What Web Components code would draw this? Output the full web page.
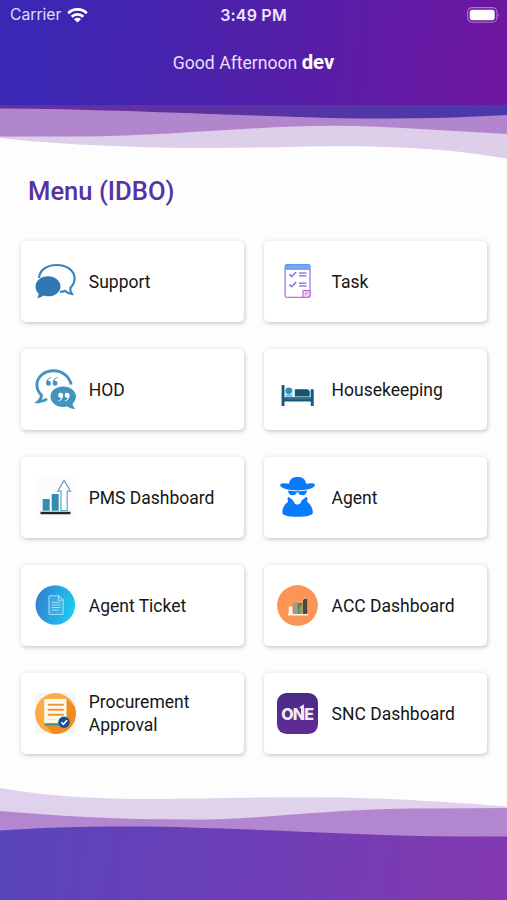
<!DOCTYPE html>
<html lang="en">
<head>
<meta charset="utf-8">
<title>Menu</title>
<style>
html,body{margin:0;padding:0}
body{width:507px;height:900px;overflow:hidden;background:#fdfdfd;font-family:Roboto,"Liberation Sans",sans-serif}
</style>
</head>
<body>
<menu-app></menu-app>
<script>
const define = (name, html) => customElements.define(name, class extends HTMLElement {
  constructor() {
    super();
    this.attachShadow({ mode: 'open' }).innerHTML = html;
  }
});

const ICONS = {
  support: `<path d="M4.200 17C4.200 9.500 11.800 4 21.700 4 32 4 39.600 9.800 39.600 17.500c0 4-1.700 7-4.300 9.500-.2 2 .4 4 1.700 6-3.200-.4-5.200-1.500-6.700-3.100-1.800.6-3.500.9-5.300.9" fill="none" stroke="#3a84bd" stroke-width="2.200"/><path d="M13 15.300c6.900 0 12.500 4.500 12.500 10.100S19.900 35.300 13 35.300c-1.700 0-3.300-.2-4.700-.7C6.700 36 4.600 37 2 37.300c1-1.400 1.600-2.900 1.600-4.800C1.700 30.700.5 28.300.5 25.400c0-5.600 5.600-10.100 12.500-10.100z" fill="#2f78b5"/>`,
  task: `<defs><linearGradient id="g" x1="0" y1="3" x2="0" y2="37" gradientUnits="userSpaceOnUse"><stop stop-color="#5e97f2"/><stop offset="1" stop-color="#c965ee"/></linearGradient></defs><rect x="8" y="4" width="25" height="4.500" fill="#7aa5f2"/><rect x="8.100" y="3.600" width="24.900" height="32.800" rx="1.800" fill="none" stroke="url(#g)" stroke-width="1.300"/><path d="M8 8.200h25" stroke="#6d96ee" stroke-width="1"/><path d="M12.500 13.500l2.200 2 4.500-4.500M12.500 23.700l2.200 2 4.500-4.500" fill="none" stroke="#8a7fdc" stroke-width="1.700"/><path d="M22 12h7.500M22 14.800h7.500M22 22.200h7.500M22 25h7.500" stroke="#8c86e2" stroke-width="1.600"/><path d="M26 36.200v-6.500h7L33 35l-1.500 1.300z" fill="#f1d8fa" stroke="#bd69e8" stroke-width="1.200"/><path d="M28.500 34.200v-2.200h2.300" fill="none" stroke="#c77bea"/>`,
  hod: `<path d="M36.200 15.500C34.200 7.200 27.200 1.800 18.500 1.800 8.700 1.800 1.900 8.300 1.900 15.800c0 4.300 1.700 7.600 4.500 10.200.2 2.500-1 4.800-3.200 6.700 3.900-.1 6.500-1.200 8.800-2.900" fill="none" stroke="#4394bd" stroke-width="2.900"/><path d="M28.200 17.500c7.300 0 12.700 4.400 12.700 10.100 0 3-1.300 5.400-3.300 7.200.2 2 1 3.600 2.800 5.100-3.400.1-6-.7-8-2.300-1.300.3-2.700.5-4.200.5-7.200 0-12.700-4.600-12.700-10.500s5.500-10.100 12.700-10.100z" fill="#4394bd"/><g fill="#4394bd"><path d="M16 8c-3.200 1-5 3.300-5 6.200a2.450 2.450 0 1 0 2-2.400c.2-1.400 1.200-2.400 3.200-3z"/><path d="M22.600 8c-3.200 1-5 3.300-5 6.200a2.450 2.450 0 1 0 2-2.400c.2-1.400 1.200-2.400 3.200-3z"/></g><g fill="#fff"><path d="M23.500 32.500c3-1 4.600-3.300 4.600-6.200a2.450 2.450 0 1 0-2 2.400c-.2 1.400-1 2.400-2.800 3z"/><path d="M30 32.500c3-1 4.600-3.300 4.600-6.200a2.450 2.450 0 1 0-2 2.400c-.2 1.400-1 2.400-2.800 3z"/></g>`,
  bed: `<path d="M4.600 16h2.900v13.200h26.300V20.300h2.900V37h-2.900v-4.500H7.500V37H4.600z" fill="#18587a"/><path d="M7.500 28h26.300v2.500H7.500z" fill="#2a7594"/><rect x="8.200" y="19" width="7.800" height="8.500" rx="1.500" fill="#c6ebf6"/><circle cx="11.800" cy="21.800" r="3.300" fill="#2f92b5"/><path d="M8.300 27.400c.5-3 7-3 7.700 0z" fill="#65bcd6"/><path d="M17.800 20.200h12.700l2.200 2v5.300H17.800z" fill="#15536f"/><path d="M31 20.300l2.300 2v5.200" fill="none" stroke="#55b9d3" stroke-width=".8"/>`,
  pms: `<rect width="41" height="41" fill="#fcfcfc"/><path d="M7.700 22h7v11.700h-7zM16.700 17h7v16.700h-7z" fill="#338daf"/><path d="M26 33.500V14.200h-3.300l6.400-10.700 6.400 10.700h-3.300v19.300z" fill="#fff" stroke="#5ca6c0" stroke-width="1.200"/><path d="M5.500 36h30" stroke="#28272b" stroke-width="2.500"/>`,
  agent: `<g fill="#087bfa"><path d="M12 6.800c.2-2 1.500-4.500 3.600-5.700 2.500-1.400 7.500-1.400 10 0 2.100 1.200 3.200 3.700 3.500 5.700 3-.4 5.500-.8 7.500-.2 1.500.5 1.700 1.900.7 3-2.300 2.300-8.300 3.800-16.600 3.800S6 11.900 3.800 9.600c-1-1.100-.7-2.500.7-3 2-.6 4.500-.2 7.500.2z"/><path d="M11 13.500c5.500 1 13.500 1 19 0-.2 3-2 4.800-4.600 4.800-2.200 0-3.700-1.300-4.200-2.700h-1.400c-.5 1.400-2 2.700-4.200 2.700-2.600 0-4.400-1.800-4.600-4.800z"/><path d="M11.200 19.800l5.200 3.400 1.600 3.900h5l1.600-3.900 5.200-3.400c.8 1.600.8 3.300.2 5 4 2.600 5.800 6.800 5.800 11 0 2.500-5.600 4-15.300 4s-15.200-1.500-15.200-4c0-4.200 1.800-8.400 5.800-11-.7-1.700-.7-3.400.1-5z"/></g><path d="M13.500 19.300c3 1 4.900.5 6.900-1 2 1.500 4 2 7 1-1.600 3.800-4.300 6.500-7 8.700-2.700-2.200-5.400-4.900-6.900-8.700z" fill="#fff"/>`,
  ticket: `<defs><linearGradient id="g" x1="0" y1=".35" x2="1" y2=".65"><stop stop-color="#3380d2"/><stop offset="1" stop-color="#1dcdf0"/></linearGradient></defs><circle cx="20.300" cy="20" r="19.800" fill="url(#g)"/><path d="M14 12c0-.8.4-1.300 1.300-1.300h8.500l4.400 4.400v13.200c0 .8-.4 1.200-1.200 1.200H15.300c-.8 0-1.300-.4-1.300-1.200zM23.500 10.700v4.600h4.700" fill="#55b5e866" stroke="#a6ddf4" stroke-width="1.100"/><path d="M16.700 17.300h8.800M16.700 19.900h8.800M16.700 22.500h8.800M16.700 25.100h7" stroke="#a6ddf4" stroke-width="1"/>`,
  acc: `<circle cx="20.500" cy="20.500" r="20.400" fill="#fb9454"/><path d="M11 28.500h20v2H11z" fill="#fff3e6"/><rect x="11.800" y="21.500" width="3.500" height="7.500" fill="#fff"/><rect x="16" y="17" width="4" height="12" fill="#a59b8d"/><rect x="20.500" y="18" width="4.700" height="11" fill="#607e69"/><path d="M22.500 21h2.500v8h-2.500z" fill="#51bb7b"/><rect x="26" y="14" width="4.200" height="15" fill="#4c4742"/><path d="M13 19l6-3 5 1 4.500-4.500" fill="none" stroke="#efb489" stroke-width=".7"/>`,
  proc: `<defs><clipPath id="c"><circle cx="20.500" cy="20.500" r="20.400"/></clipPath></defs><rect width="41" height="41" fill="#f8f6f4"/><circle cx="20.500" cy="20.500" r="20.400" fill="#fbad43"/><path clip-path="url(#c)" d="M31.500 5.500L44 18v25H20L10 32z" fill="#f28a20"/><path d="M9.300 7.200q0-1.200 1.200-1.200h19.800q1.200 0 1.200 1.200v25.300H9.300z" fill="#fffaf0"/><path d="M9.300 30.200h18v2.500h-18z" fill="#279d86"/><path d="M13.500 11.700h14.500M13.500 16.700h14.500M13.500 21.700h14.500" stroke="#e8973a" stroke-width="1.900" stroke-linecap="round"/><path d="M13.500 26.500h8" stroke="#fae3c3" stroke-width="1.500"/><circle cx="29" cy="29.300" r="5.700" fill="#174d9b"/><path d="M26.300 29.300l2 2 3.800-4" fill="none" stroke="#fff" stroke-width="1.600"/>`,
  one: `<defs><linearGradient id="g" x1="0" y1="0" x2="0" y2="1"><stop stop-color="#482a86"/><stop offset="1" stop-color="#632b96"/></linearGradient></defs><rect width="41" height="41" rx="9.500" fill="url(#g)"/><text x="20.200" y="26.800" text-anchor="middle" fill="#f1ebf8" font-family="Inter,sans-serif" font-weight="800" font-size="16" letter-spacing="-.8">ONE</text><path d="M22.600 14l4.300-2.800v15.600h-2.900V15.200h-1.400z" fill="#f1ebf8"/>`
};

customElements.define('menu-icon', class extends HTMLElement {
  connectedCallback() {
    this.attachShadow({ mode: 'open' }).innerHTML =
      `<style>:host{display:block;width:41px;height:41px;flex:none}svg{display:block;overflow:visible}</style>
       <svg width="41" height="41" viewBox="0 0 41 41">${ICONS[this.getAttribute('name')]}</svg>`;
  }
});

customElements.define('menu-card', class extends HTMLElement {
  connectedCallback() {
    this.attachShadow({ mode: 'open' }).innerHTML =
      `<style>
        :host{display:flex;align-items:center;box-sizing:border-box;padding-left:13.400px;gap:13.200px;background:#fff;border-radius:5px;
          box-shadow:1px 2px 4px rgba(0,0,0,.15),0 0 5px rgba(0,0,0,.09);font-size:17.500px;line-height:23px;color:#161616}
        div{width:140px;padding-top:2px}
      </style>
      <menu-icon name="${this.getAttribute('icon')}"></menu-icon><div><slot></slot></div>`;
  }
});

define('status-bar', `<style>
  :host{display:grid;grid-template-columns:1fr auto 1fr;align-items:center;height:30px;padding:0 7px 0 10px;font:400 15.700px/20px Inter,sans-serif;color:#e3dcf7}
  .l{display:flex;align-items:center;gap:6px}
  .t{font-weight:600;font-size:16px;letter-spacing:.2px;color:#eee4fb;margin-right:3px}
  .r{justify-self:end}
  svg{display:block}
</style>
<div class="l"><span>Carrier</span><svg width="21" height="16" viewBox="0 0 21 16" fill="none" stroke="#fff" stroke-width="2.700"><path d="M1.200 6.200a13.300 13.300 0 0 1 18.600 0M4.700 9.700a8.300 8.300 0 0 1 11.600 0"/><path d="M7 12.200a5 5 0 0 1 7 0L10.500 15.600z" fill="#fff" stroke="none"/></svg></div>
<span class="t">3:49 PM</span>
<svg class="r" width="33" height="16" viewBox="0 0 33 16"><rect x=".6" y=".6" width="29.300" height="14.600" rx="4.500" fill="none" stroke="#a77acb" stroke-width="1.100"/><rect x="2.700" y="2.700" width="25" height="10.500" rx="2.600" fill="#fff"/><path d="M31.200 5.700q1.600 2.200 0 4.400z" fill="#a77acb"/></svg>`);

define('app-header', `<style>
  :host{display:block;height:105.500px;background:linear-gradient(95deg,#3828b4 4%,#4f20aa 48%,#6f16a0 100%)}
  p{margin:0;padding-top:20px;text-align:center;font-size:17.600px;line-height:24px;color:#e9defa}
  b{font-size:20.300px;color:#fff}
</style>
<status-bar></status-bar><p>Good Afternoon <b>dev</b></p>`);

define('wave-top', `<style>:host{display:block;height:54.500px}svg{display:block;margin-top:-.5px}</style>
<svg width="507" height="55" viewBox="0 105 507 55">
<defs><linearGradient id="g"><stop stop-color="#6c2d9d"/><stop offset="1" stop-color="#4839ac"/></linearGradient></defs>
<path d="M0 105H507V158.500C450 149 400 146 330 146.200C270 147 240 148.500 185 148C110 147 50 143.500 0 138z" fill="#ddcfe9"/>
<path d="M0 105H507V134C450 131 390 126 335 125.700C260 125.500 170 136 80 136.500H0z" fill="#b186cd"/>
<path d="M0 105H507V115C440 119 370 119.500 300 117C200 114 100 109 0 108.500z" fill="url(#g)"/>
</svg>`);

define('wave-bottom', `<style>:host{display:block;height:115px}svg{display:block}</style>
<svg width="507" height="115" viewBox="0 785 507 115">
<defs><linearGradient id="g" x1="0" y1="0" x2="1" y2=".02"><stop stop-color="#5945bb"/><stop offset=".5" stop-color="#6d3eb6"/><stop offset="1" stop-color="#8339af"/></linearGradient></defs>
<path d="M0 788C50 797 110 799.500 165 799C230 798 280 796.500 340 797.500C410 799 460 803 507 806.500V900H0z" fill="#e0d1ec"/>
<path d="M0 811C60 816 120 819.500 190 819.500C270 819.500 330 808 430 808.500L507 808V900H0z" fill="#b387d0"/>
<path d="M0 830.500C50 827 90 826 150 826.500C260 828.500 360 836 460 836.500H507V900H0z" fill="url(#g)"/>
</svg>`);

define('menu-grid', `<style>
  :host{display:grid;grid-template-columns:223px 223px;grid-auto-rows:81.300px;column-gap:19.800px;row-gap:26.650px;padding:0 20px 0 21.200px}
</style><slot></slot>`);

define('menu-app', `<style>
  :host{display:flex;flex-direction:column;width:507px;height:900px}
  h1{margin:15px 0 34px 28px;font-size:25.600px;line-height:32px;font-weight:500;color:#5533a2}
  wave-bottom{margin-top:auto}
</style>
<app-header></app-header>
<wave-top></wave-top>
<h1>Menu (IDBO)</h1>
<menu-grid>
  <menu-card icon="support">Support</menu-card><menu-card icon="task">Task</menu-card>
  <menu-card icon="hod">HOD</menu-card><menu-card icon="bed">Housekeeping</menu-card>
  <menu-card icon="pms">PMS Dashboard</menu-card><menu-card icon="agent">Agent</menu-card>
  <menu-card icon="ticket">Agent Ticket</menu-card><menu-card icon="acc">ACC Dashboard</menu-card>
  <menu-card icon="proc">Procurement Approval</menu-card><menu-card icon="one">SNC Dashboard</menu-card>
</menu-grid>
<wave-bottom></wave-bottom>`);
</script>
</body>
</html>
